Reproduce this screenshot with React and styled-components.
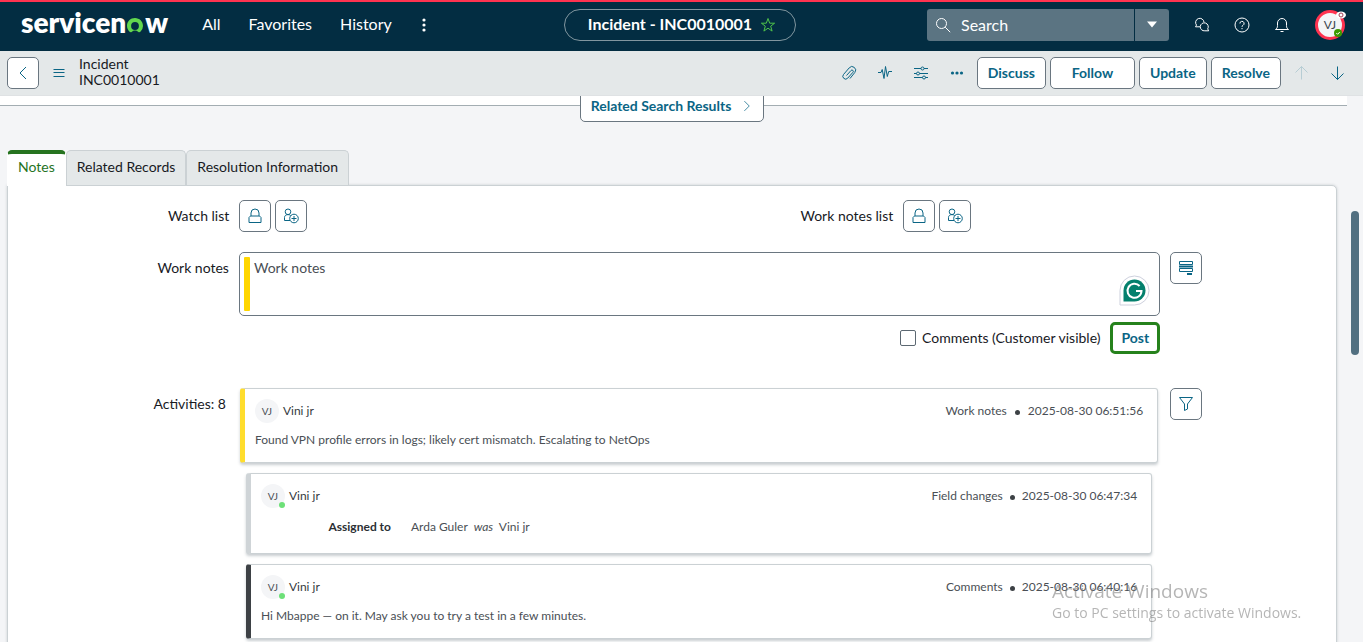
import React from "react";
import styled, { createGlobalStyle, css } from "styled-components";

const GlobalStyle = createGlobalStyle`
  *, *::before, *::after { box-sizing: border-box; }
  html, body { margin: 0; background: #f4f5f7; }
  body, button, input, textarea {
    font-family: Lato, "Open Sans", sans-serif;
    font-size: 14px;
    line-height: 16px;
  }
  button { margin: 0; padding: 0; cursor: pointer; }
  svg { display: block; flex: none; }
`;

const teal = "#0a6585";

const App = styled.div`
  display: flex;
  flex-direction: column;
  height: 100vh;
  overflow: hidden;
  color: #181a1f;
`;

/* ---------- top navigation ---------- */

const TopNav = styled.header`
  display: grid;
  grid-template-columns: 1fr auto 1fr;
  align-items: center;
  flex: none;
  height: 51px;
  padding: 0 3px 4px 0;
  border-top: 2px solid #ff3350;
  background: #032d42;
  color: #fff;
`;

const NavLeft = styled.div`
  display: flex;
  align-items: center;
  padding-left: 21px;
`;

const Logo = styled.a`
  display: flex;
  align-items: center;
  margin: 0 34px 0 0;
  padding-bottom: 6px;
  color: #fff;
  font-size: 28px;
  font-weight: 800;
  line-height: 32px;
  text-decoration: none;
  svg { margin: 8px 1px 0 0; }
`;

const NavLink = styled.a`
  margin-right: 28px;
  padding-bottom: 2px;
  color: #fff;
  font-size: 16px;
  line-height: 20px;
  text-decoration: none;
`;

const NavIcon = styled.button`
  display: flex;
  align-items: center;
  justify-content: center;
  width: 24px;
  height: 32px;
  border: 0;
  background: none;
  color: #fff;
`;

const MoreButton = styled(NavIcon)`
  margin-left: -8px;
`;

const TitlePill = styled.div`
  display: flex;
  align-items: center;
  justify-content: center;
  gap: 8px;
  width: 232px;
  height: 32px;
  padding-left: 4px;
  border: 1px solid #81969f;
  border-radius: 16px;
  font-size: 16px;
  font-weight: 700;
`;

const PillText = styled.span`
  padding-bottom: 2px;
`;

const StarButton = styled(NavIcon)`
  width: 16px;
  color: #4fc34a;
`;

const NavRight = styled.div`
  display: flex;
  align-items: center;
  justify-content: flex-end;
  gap: 16px;
  padding-right: 15px;
`;

const SearchBox = styled.div`
  display: flex;
  gap: 1px;
  width: 242px;
  height: 32px;
  margin-right: 5px;
`;

const SearchField = styled.label`
  display: flex;
  flex: 1;
  align-items: center;
  gap: 10px;
  min-width: 0;
  padding-left: 8px;
  border-radius: 3px 0 0 3px;
  background: #5b7482;
`;

const SearchInput = styled.input`
  flex: 1;
  min-width: 0;
  padding: 0;
  border: 0;
  outline: 0;
  background: none;
  color: #fff;
  font-size: 16px;
  line-height: 20px;
  &::placeholder { color: #fff; opacity: 1; }
`;

const SearchMenu = styled.button`
  display: flex;
  align-items: center;
  justify-content: center;
  width: 34px;
  border: 0;
  border-radius: 0 3px 3px 0;
  background: #5b7482;
  color: #fff;
`;

const UserButton = styled.button`
  position: relative;
  width: 30px;
  height: 30px;
  margin-left: 5px;
  border: 3px solid #ff3350;
  border-radius: 50%;
  background: #f4f5f7;
  color: #3c4650;
  font-size: 12px;
`;

const EyeBadge = styled.span`
  position: absolute;
  top: -2px;
  right: -4px;
`;

const CheckBadge = styled.span`
  position: absolute;
  right: 0;
  bottom: 0;
`;

/* ---------- record header ---------- */

const RecordBar = styled.div`
  display: flex;
  align-items: center;
  flex: none;
  height: 45px;
  padding: 0 10px 0 7px;
  border-bottom: 1px solid #dfe2e4;
  background: #e4e8e9;
`;

const Button = styled.button`
  display: flex;
  align-items: center;
  justify-content: center;
  flex: none;
  min-width: ${(p) => (p.$wide ? "85px" : "32px")};
  height: 32px;
  padding: 0 10px;
  border: 1px solid #6a7680;
  border-radius: 5px;
  background: #fff;
  color: ${teal};
  font-weight: 700;
  ${(p) => p.$icon && css`
    width: 32px;
    padding: 0;
  `}
  ${(p) => p.$primary && css`
    border: 3px solid #26821c;
    padding: 0 8px;
  `}
`;

const GhostButton = styled.button`
  display: flex;
  align-items: center;
  justify-content: center;
  width: 32px;
  height: 32px;
  border: 0;
  background: none;
  color: ${teal};
  &:disabled { color: #b7cdd4; }
`;

const MenuButton = styled(GhostButton)`
  width: 40px;
`;

const RecordTitle = styled.h1`
  margin: 0 auto 0 0;
  padding-bottom: 2px;
  font-size: 14px;
  font-weight: 400;
  line-height: 16px;
  span { display: block; }
`;

const Actions = styled.div`
  display: flex;
  gap: 4px;
`;

/* ---------- scrolling body ---------- */

const Body = styled.div`
  display: flex;
  flex: 1;
  min-height: 0;
  overflow: hidden;
`;

const Content = styled.main`
  flex: 1;
  min-width: 0;
`;

const ScrollRail = styled.div`
  flex: none;
  width: 16px;
  padding: 115px 4px 0;
`;

const ScrollThumb = styled.div`
  height: 144px;
  border-radius: 4px;
  background: #527081;
`;

const SectionEnd = styled.div`
  height: 10px;
  border-bottom: 1px solid #a3adb2;
  background: #fff;
`;

const RelatedRow = styled.div`
  display: flex;
  justify-content: center;
  margin: -16px 3px 28px 0;
`;

const RelatedButton = styled(Button)`
  z-index: 1;
  gap: 10px;
`;

const Tabs = styled.div`
  display: flex;
  margin: 0 7px;
`;

const Tab = styled.button`
  height: 35px;
  padding: 0 10px 2px;
  border: 1px solid #cbd1d4;
  border-bottom: 0;
  border-radius: 5px 5px 0 0;
  background: #e4e8e9;
  color: #181a1f;
  ${(p) => p.$active && css`
    z-index: 1;
    height: 36px;
    margin-bottom: -1px;
    padding-bottom: 6px;
    border-color: #fff;
    border-top: 4px solid #26731f;
    background: #fff;
    color: #26731f;
  `}
`;

const Panel = styled.section`
  margin: 0 10px 0 7px;
  min-height: 100vh;
  padding-top: 14px;
  border: 1px solid #cbd1d4;
  border-radius: 0 5px 0 0;
  background: #fff;
  box-shadow: 0 0 3px rgba(40, 60, 70, 0.2);
`;

const Columns = styled.div`
  display: grid;
  grid-template-columns: 1fr 1fr;
  margin-bottom: 20px;
`;

const ListField = styled.div`
  display: flex;
  gap: 4px;
`;

const FieldLabel = styled.label`
  flex: none;
  width: ${(p) => (p.$half ? "33.33%" : "18.5%")};
  margin-right: ${(p) => (p.$half ? "6px" : "10px")};
  padding: 8px ${(p) => (p.$inset ? "3px" : "0px")} 0 0;
  text-align: right;
`;

const Row = styled.div`
  display: flex;
  align-items: flex-start;
  padding-right: calc(10% + 1px);
`;

const NoteBox = styled.div`
  display: flex;
  flex: 1;
  height: 64px;
  margin-right: 10px;
  padding: 4px;
  border: 1px solid #6a7680;
  border-radius: 5px;
`;

const NoteMark = styled.div`
  width: 6px;
  border-radius: 1px;
  background: #ffd600;
`;

const NoteInput = styled.textarea`
  flex: 1;
  padding: 3px 4px;
  border: 0;
  outline: 0;
  resize: none;
  &::placeholder { color: #4a4f55; opacity: 1; }
`;

const NoteHelper = styled.div`
  align-self: flex-end;
  margin: 0 5px 5px 0;
`;

const PostRow = styled.div`
  display: flex;
  align-items: center;
  justify-content: flex-end;
  gap: 10px;
  margin: 6px 0 34px;
  padding-right: calc(10% + 43px);
`;

const CheckLabel = styled.label`
  display: flex;
  align-items: center;
  gap: 6px;
`;

const CheckBox = styled.input`
  appearance: none;
  width: 16px;
  height: 16px;
  margin: 0;
  border: 1px solid #5c6872;
  border-radius: 2px;
  background: #fff;
  &:checked { background: ${teal}; }
`;

const Feed = styled.ul`
  display: flex;
  flex: 1;
  flex-direction: column;
  gap: 10px;
  margin: 0 12px 0 1px;
  padding: 0;
  list-style: none;
`;

const marks = { work: "#ffdd2d", field: "#cfd4d7", comment: "#3d4145" };

const Entry = styled.li`
  margin: 0 ${(p) => (p.$kind === "work" ? "0px" : "6px")};
  padding: 10px 14px ${(p) => (p.$kind === "field" ? "18px" : "14px")} 10px;
  border: 1px solid #cbd1d4;
  border-left: 5px solid ${(p) => marks[p.$kind]};
  border-radius: 3px;
  background: #fff;
  box-shadow: 0 2px 3px rgba(40, 60, 70, 0.25);
  color: #4a4f55;
  font-size: 12px;
`;

const EntryHead = styled.div`
  display: flex;
  align-items: center;
  height: 24px;
`;

const Avatar = styled.span`
  position: relative;
  width: 24px;
  margin-right: 4px;
  border-radius: 50%;
  background: #f4f5f7;
  font-size: 10px;
  line-height: 24px;
  text-align: center;
`;

const Presence = styled.span`
  position: absolute;
  right: 0;
  bottom: 0;
  width: 6px;
  height: 6px;
  border-radius: 50%;
  background: #6de078;
`;

const Author = styled.span`
  margin-right: auto;
  color: #343940;
`;

const Dot = styled.span`
  width: 5px;
  height: 5px;
  margin: 2px ${(p) => (p.$kind === "work" ? "8px" : "7px")} 0;
  border-radius: 50%;
  background: #3d4145;
`;

const EntryText = styled.p`
  margin: 9px 0 0;
`;

const Changes = styled.dl`
  display: flex;
  gap: 20px;
  margin: 11px 0 0;
  dt {
    width: 130px;
    color: #2b2f34;
    font-weight: 700;
    text-align: right;
  }
  dd { margin: 0; }
  em { margin: 0 3px; }
`;

const Watermark = styled.div`
  position: fixed;
  right: 56px;
  bottom: 18px;
  z-index: 5;
  width: 255px;
  color: rgba(120, 120, 120, 0.55);
  font-family: "Open Sans", sans-serif;
  font-size: 14px;
  line-height: 22px;
  white-space: nowrap;
  pointer-events: none;
  strong {
    display: block;
    font-size: 19px;
    font-weight: 400;
  }
`;

/* ---------- icons ---------- */

const Icon = ({ size = 16, children, ...rest }) => (
  <svg width={size} height={size} viewBox="0 0 16 16" fill="none" stroke="currentColor" strokeWidth="1" aria-hidden="true" {...rest}>
    {children}
  </svg>
);

const LogoRing = () => (
  <svg width="18" height="17" viewBox="0 0 18 17" aria-hidden="true">
    <path fill="#62d84e" d="M9 1C4.400 1 1 4.500 1 8.800c0 2.400 1 4.500 2.600 6 .6.500 1.400.600 2 .100a5.500 5.500 0 0 1 6.800 0c.6.500 1.400.400 2-.100A8.100 8.100 0 0 0 17 8.900C17 4.600 13.500 1 9 1Zm0 11.900a3.900 3.900 0 1 1 0-7.800 3.900 3.900 0 0 1 0 7.800Z" />
  </svg>
);

const LockIcon = () => (
  <Icon><path d="M4 8V5a4 4 0 0 1 8 0v3M2 9.500L3.500 8h9L14 9.500v5H2z" /></Icon>
);

const AddMeIcon = () => (
  <Icon>
    <circle cx="5" cy="3.800" r="2.800" />
    <path d="M7 12.500H1.500V9.500c0-1.800 1.500-2.900 3.500-2.900 1.200 0 2.100.4 2.700 1" />
    <circle cx="11" cy="10.500" r="4.300" />
    <path d="M11 8v5M8.500 10.500h5" />
  </Icon>
);

const Grammarly = () => (
  <svg width="31" height="31" viewBox="0 0 31 31" aria-hidden="true">
    <path d="M1 30V15.500A14.500 14.500 0 1 1 15.500 30Z" fill="#fff" stroke="#cdd0dd" />
    <path d="M4.500 26.500v-11a11 11 0 1 1 11 11Z" fill="#04806d" />
    <path d="M20.600 11a7 7 0 1 0 1.900 5H17" fill="none" stroke="#fff" strokeWidth="2" />
  </svg>
);

/* ---------- data ---------- */

const entries = [
  { kind: "work", type: "Work notes", time: "2025-08-30 06:51:56", text: "Found VPN profile errors in logs; likely cert mismatch. Escalating to NetOps" },
  { kind: "field", type: "Field changes", time: "2025-08-30 06:47:34", online: true, change: ["Assigned to", "Arda Guler", "Vini jr"] },
  { kind: "comment", type: "Comments", time: "2025-08-30 06:40:16", online: true, text: "Hi Mbappe — on it. May ask you to try a test in a few minutes." },
];

const UserListField = ({ label, id }) => (
  <ListField>
    <FieldLabel $half htmlFor={id}>{label}</FieldLabel>
    <Button $icon id={id} aria-label={`Unlock ${label}`}><LockIcon /></Button>
    <Button $icon aria-label={`Add me to ${label}`}><AddMeIcon /></Button>
  </ListField>
);

export default function IncidentPage() {
  return (
    <App>
      <GlobalStyle />
      <TopNav>
        <NavLeft>
          <Logo href="#home" aria-label="servicenow">
            <span>servicen</span><LogoRing /><span>w</span>
          </Logo>
          <NavLink href="#all">All</NavLink>
          <NavLink href="#favorites">Favorites</NavLink>
          <NavLink href="#history">History</NavLink>
          <MoreButton aria-label="More menus">
            <Icon stroke="none" fill="currentColor">
              <circle cx="8" cy="3" r="1.600" /><circle cx="8" cy="8" r="1.600" /><circle cx="8" cy="13" r="1.600" />
            </Icon>
          </MoreButton>
        </NavLeft>
        <TitlePill>
          <PillText>Incident - INC0010001</PillText>
          <StarButton aria-label="Add to favorites">
            <Icon><path d="M8 1.500l1.700 4.700h4.900l-3.900 3 1.400 4.900L8 11.200l-4.100 2.900 1.400-4.900-3.900-3h4.900z" /></Icon>
          </StarButton>
        </TitlePill>
        <NavRight>
          <SearchBox>
            <SearchField>
              <Icon><circle cx="6.500" cy="6.500" r="5" /><path d="M10.200 10.200l5 5" /></Icon>
              <SearchInput placeholder="Search" aria-label="Search" />
            </SearchField>
            <SearchMenu aria-label="Search scope">
              <svg width="12" height="7" viewBox="0 0 12 7" aria-hidden="true"><path d="M1 .5h10L6 6.500z" fill="currentColor" /></svg>
            </SearchMenu>
          </SearchBox>
          <NavIcon aria-label="Conversations">
            <Icon>
              <path d="M6 9.800H1.500l1-1.700A4.200 4.200 0 1 1 10 5.200" />
              <path d="M13.700 11.900l1 1.900H10.800A4 4 0 1 1 13.700 11.900z" />
            </Icon>
          </NavIcon>
          <NavIcon aria-label="Help">
            <Icon>
              <circle cx="8" cy="8" r="7" />
              <path d="M5.900 6.500a2.100 2.100 0 1 1 3.100 1.800c-.7.400-1 .7-1 1.500" />
              <path d="M8 11v1.200" />
            </Icon>
          </NavIcon>
          <NavIcon aria-label="Notifications">
            <Icon><path d="M1.500 12.500c1.500-1 2-2 2-4V6a4.500 4.500 0 0 1 9 0v2.500c0 2 .5 3 2 4zM6.500 14.500h3" /></Icon>
          </NavIcon>
          <UserButton aria-label="User menu">
            VJ
            <EyeBadge>
              <svg width="10" height="8" viewBox="0 0 10 8" aria-hidden="true">
                <ellipse cx="5" cy="4" rx="5" ry="3.500" fill="#fff" />
                <circle cx="5" cy="4" r="2" fill="#fff" stroke="#a33a55" />
              </svg>
            </EyeBadge>
            <CheckBadge>
              <svg width="8" height="8" viewBox="0 0 8 8" aria-hidden="true">
                <circle cx="4" cy="4" r="4" fill="#3c9a00" />
                <path d="M2.300 4l1.300 1.300 2.200-2.300" fill="none" stroke="#fff" />
              </svg>
            </CheckBadge>
          </UserButton>
        </NavRight>
      </TopNav>

      <RecordBar>
        <Button $icon aria-label="Back"><Icon><path d="M11 2l-6 6 6 6" /></Icon></Button>
        <MenuButton aria-label="Additional actions">
          <Icon><path d="M2.500 4.500h11M2.500 7.500h11M2.500 11.500h11" /></Icon>
        </MenuButton>
        <RecordTitle><span>Incident</span><span>INC0010001</span></RecordTitle>
        <Actions>
          <GhostButton aria-label="Attachments">
            <Icon><path d="M5.500 10.500l4.500-5a1.300 1.300 0 0 1 2 1.700l-5.300 6a2.800 2.800 0 0 1-4.200-3.700l5.700-6.600a3.600 3.600 0 0 1 5.600 4.600L9 13.500" /></Icon>
          </GhostButton>
          <GhostButton aria-label="Activity stream">
            <Icon><path d="M1 7.500h3l1.200-3L7 13.500l1.500-12 1.800 10 1.400-5H15" /></Icon>
          </GhostButton>
          <GhostButton aria-label="Personalize form">
            <Icon>
              <path d="M1 3.500h7M11 3.500h4M1 8.500h2.500M6.500 8.500H15M1 12.500h8.500M12.500 12.500H15" />
              <circle cx="9.500" cy="3.500" r="1.500" /><circle cx="5" cy="8.500" r="1.500" /><circle cx="11" cy="12.500" r="1.500" />
            </Icon>
          </GhostButton>
          <GhostButton aria-label="More options">
            <Icon stroke="none" fill="currentColor">
              <circle cx="3.500" cy="8" r="1.600" /><circle cx="8" cy="8" r="1.600" /><circle cx="12.500" cy="8" r="1.600" />
            </Icon>
          </GhostButton>
          <Button>Discuss</Button>
          <Button $wide>Follow</Button>
          <Button>Update</Button>
          <Button>Resolve</Button>
          <GhostButton disabled aria-label="Previous record">
            <Icon><path d="M8.500 14.500v-13M2.500 7.500l6-6 6 6" /></Icon>
          </GhostButton>
          <GhostButton aria-label="Next record">
            <Icon><path d="M8.500 1.500v13M2.500 8.500l6 6 6-6" /></Icon>
          </GhostButton>
        </Actions>
      </RecordBar>

      <Body>
        <Content>
          <SectionEnd />
          <RelatedRow>
            <RelatedButton>
              Related Search Results
              <Icon size={12}><path d="M4.500 1.500L11 8l-6.500 6.500" /></Icon>
            </RelatedButton>
          </RelatedRow>
          <Tabs role="tablist">
            <Tab role="tab" aria-selected="true" $active>Notes</Tab>
            <Tab role="tab" aria-selected="false">Related Records</Tab>
            <Tab role="tab" aria-selected="false">Resolution Information</Tab>
          </Tabs>
          <Panel>
            <Columns>
              <UserListField label="Watch list" id="watch-list" />
              <UserListField label="Work notes list" id="work-notes-list" />
            </Columns>
            <Row>
              <FieldLabel htmlFor="work-notes">Work notes</FieldLabel>
              <NoteBox>
                <NoteMark />
                <NoteInput id="work-notes" placeholder="Work notes" />
                <NoteHelper><Grammarly /></NoteHelper>
              </NoteBox>
              <Button $icon aria-label="Show all journal fields">
                <Icon>
                  <path d="M1.500 1.500h13v3h-13zM1.500 8.500h13v3h-13z" />
                  <path d="M1 6.500h14M9 14h5" strokeWidth="2" />
                </Icon>
              </Button>
            </Row>
            <PostRow>
              <CheckLabel>
                <CheckBox type="checkbox" />
                Comments (Customer visible)
              </CheckLabel>
              <Button $primary>Post</Button>
            </PostRow>
            <Row>
              <FieldLabel as="div" $inset>Activities: 8</FieldLabel>
              <Feed>
                {entries.map((e) => (
                  <Entry key={e.time} $kind={e.kind}>
                    <EntryHead>
                      <Avatar>VJ{e.online && <Presence />}</Avatar>
                      <Author>Vini jr</Author>
                      <span>{e.type}</span>
                      <Dot $kind={e.kind} />
                      <time>{e.time}</time>
                    </EntryHead>
                    {e.text && <EntryText>{e.text}</EntryText>}
                    {e.change && (
                      <Changes>
                        <dt>{e.change[0]}</dt>
                        <dd>{e.change[1]} <em>was</em> {e.change[2]}</dd>
                      </Changes>
                    )}
                  </Entry>
                ))}
              </Feed>
              <Button $icon aria-label="Filter activities">
                <Icon><path d="M1.500 1.500h13L9.500 8v5l-3 1.500V8z" /></Icon>
              </Button>
            </Row>
          </Panel>
        </Content>
        <ScrollRail><ScrollThumb /></ScrollRail>
      </Body>

      <Watermark>
        <strong>Activate Windows</strong>
        Go to PC settings to activate Windows.
      </Watermark>
    </App>
  );
}
